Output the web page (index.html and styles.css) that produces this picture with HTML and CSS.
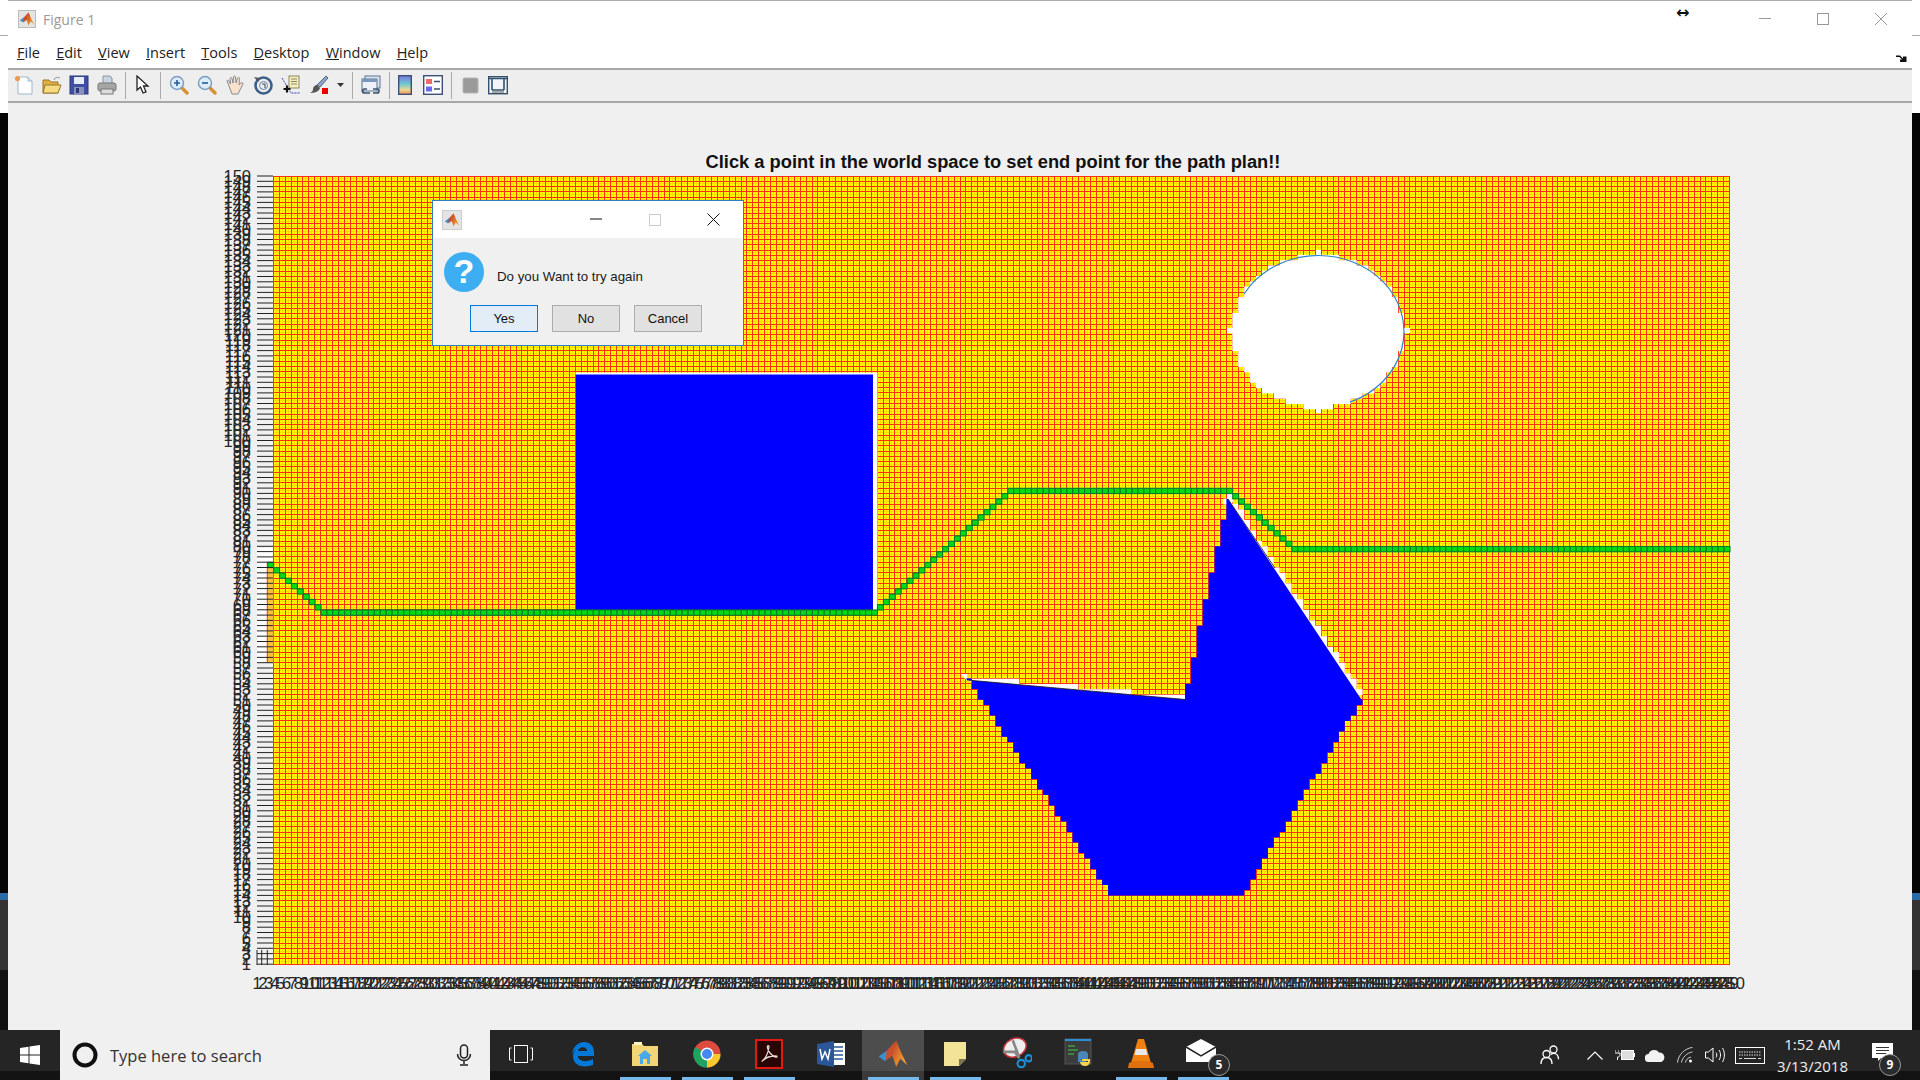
FILE: index.html
```html
<!DOCTYPE html>
<html lang="en">
<head>
  <meta charset="UTF-8" />
  <title>Figure 1</title>
  <link rel="stylesheet" href="styles.css">
</head>
<body>
  <svg class="defs" width="0" height="0">
    <defs>
      <linearGradient id="mlpeak" x1="0" y1="0" x2="1" y2="1"><stop offset="0" stop-color="#b8392a"/><stop offset=".6" stop-color="#e8882c"/><stop offset="1" stop-color="#f4b04a"/></linearGradient>
    </defs>
    <symbol id="ml" viewBox="0 0 20 20">
      <polygon points="1,11.5 6,8 9,10 5,14.5" fill="#3a8fd0"/>
      <polygon points="6,8 12,1.5 10,11 5.5,14" fill="#c9502a"/>
      <polygon points="12,1.5 15.5,10 19,17 14.5,13 12,18 9.5,11" fill="url(#mlpeak)"/>
    </symbol>
  </svg>

  <div class="desktop">
    <div class="edge edge-left"></div>
    <div class="window">
      <div class="titlebar">
        <span class="app-icon"><svg width="16" height="16"><use href="#ml"/></svg></span>
        <span class="title-text">Figure 1</span>
        <span class="resize-cursor">↔</span>
        <div class="win-btns">
          <svg width="14" height="14" viewBox="0 0 14 14"><path d="M1 6.500h12" stroke="#999" fill="none"/></svg>
          <svg width="14" height="14" viewBox="0 0 14 14"><rect x="1.500" y="1.500" width="11" height="11" stroke="#999" fill="none"/></svg>
          <svg width="14" height="14" viewBox="0 0 14 14"><path d="M1 1l12 12M13 1L1 13" stroke="#999" fill="none"/></svg>
        </div>
      </div>

      <div class="menubar">
        <span class="menu"><u>F</u>ile</span>
        <span class="menu"><u>E</u>dit</span>
        <span class="menu"><u>V</u>iew</span>
        <span class="menu"><u>I</u>nsert</span>
        <span class="menu"><u>T</u>ools</span>
        <span class="menu"><u>D</u>esktop</span>
        <span class="menu"><u>W</u>indow</span>
        <span class="menu"><u>H</u>elp</span>
        <svg class="dock-arrow" width="11" height="8" viewBox="0 0 11 8"><path d="M0 1.500h4l3 3V2.500l3.500 0V8H4V5.500h2L3.500 3H0z" fill="#111"/></svg>
      </div>

      <div class="toolbar">
        <div class="tb-group g1">
          <svg class="ti" viewBox="0 0 20 20"><path d="M4 2h10l4 4v13H4z" fill="#fff" stroke="#9db8d0"/><path d="M14 2v4h4" fill="#d8e6f2" stroke="#9db8d0"/><circle cx="3.500" cy="3.500" r="2.600" fill="#f09a50"/></svg>
          <svg class="ti" viewBox="0 0 20 20"><path d="M1 5h6l2 2h7v11H1z" fill="#e0b040" stroke="#96742a"/><path d="M3 10h16l-3 8H1z" fill="#f6dc80" stroke="#96742a"/><path d="M12 5c1-3 4-3 6-2" stroke="#7c8ea0" fill="none"/></svg>
          <svg class="ti" viewBox="0 0 20 20"><rect x="1" y="1" width="18" height="18" fill="#3f4fa8" stroke="#2c3678"/><rect x="5" y="2" width="10" height="7" fill="#e8ecf6"/><rect x="5" y="12" width="10" height="7" fill="#8a92b8"/><rect x="7" y="13" width="3" height="5" fill="#2c3678"/></svg>
          <svg class="ti" viewBox="0 0 20 20"><path d="M6 1h7l2 2v6H6z" fill="#c8d4e0" stroke="#8a949e"/><rect x="1" y="8" width="18" height="8" rx="2" fill="#a6a6a6" stroke="#777"/><rect x="4" y="14" width="12" height="5" fill="#dcdcdc" stroke="#777"/></svg>
        </div>
        <span class="sep"></span>
        <svg class="ti narrow" viewBox="0 0 18 20"><path d="M3 1v14l3.500-3 2.500 6 3-1.200-2.500-5.800H14z" fill="#fff" stroke="#222" stroke-width="1.300"/></svg>
        <span class="sep"></span>
        <div class="tb-group g3">
          <svg class="ti" viewBox="0 0 20 20"><path d="M12 12l6 6" stroke="#d89030" stroke-width="3.400" stroke-linecap="round"/><circle cx="8" cy="8" r="6.500" fill="#dcecf8" stroke="#7a9cc0" stroke-width="1.400"/><path d="M5 8h6M8 5v6" stroke="#2a5a9a" stroke-width="1.600"/></svg>
          <svg class="ti" viewBox="0 0 20 20"><path d="M12 12l6 6" stroke="#d89030" stroke-width="3.400" stroke-linecap="round"/><circle cx="8" cy="8" r="6.500" fill="#dcecf8" stroke="#7a9cc0" stroke-width="1.400"/><path d="M5 8h6" stroke="#2a5a9a" stroke-width="1.600"/></svg>
          <svg class="ti" viewBox="0 0 20 20"><path d="M4 11L2 6c0-1 1.500-1 2 0l1.500 3L5 3.500c0-1.200 2-1.200 2 0L8 8l.5-6c0-1.200 2-1.200 2 0L11 8l1.500-5c.5-1 2-.7 2 .5L14 10l2-2c1-1 2.500 0 2 1l-3 6-2 4H7z" fill="#f8e2cc" stroke="#8a8a9a"/></svg>
          <svg class="ti" viewBox="0 0 20 20"><circle cx="10.500" cy="10.500" r="8" fill="none" stroke="#3d5f88" stroke-width="2.600"/><circle cx="10.500" cy="10.500" r="4" fill="#e8eef4" stroke="#66809c"/><path d="M1 2l6 1-2 4z" fill="#556"/><path d="M9 9h3v4" stroke="#444" fill="none"/></svg>
          <svg class="ti" viewBox="0 0 20 20"><rect x="8" y="1" width="10" height="12" fill="#f4eec0" stroke="#8a8a60"/><path d="M10 4h6M10 6.500h6M10 9h6" stroke="#8a8a60"/><path d="M1 3l9 15h9" stroke="#3d3dd0" fill="none" stroke-dasharray="2 1"/><path d="M6 10.500v7M2.500 14h7" stroke="#111" stroke-width="2.200"/></svg>
          <svg class="ti" viewBox="0 0 20 20"><path d="M17 1l2 2-8 9-3-2z" fill="#8aa4d8" stroke="#566"/><path d="M8 10l3 3c-1 4-6 5-10 5 2-1 3-2 3-4s2-4 4-4z" fill="#555"/><rect x="13" y="13" width="6" height="6" fill="#e80000"/></svg>
        </div>
        <svg class="drop" width="7" height="4" viewBox="0 0 7 4"><path d="M0 0h7L3.500 4z" fill="#333"/></svg>
        <span class="sep"></span>
        <svg class="ti" viewBox="0 0 20 20"><rect x="4" y="1" width="15" height="12" fill="#dde6f0" stroke="#5a7090"/><rect x="1" y="4" width="15" height="12" fill="#eef2f8" stroke="#5a7090"/><rect x="1" y="4" width="15" height="3" fill="#7a98bc"/><path d="M6 14H3.500a2 2 0 000 4H9M12 14h4a2 2 0 010 4h-4" stroke="#3d556f" stroke-width="1.700" fill="none"/></svg>
        <span class="sep"></span>
        <div class="tb-group g5">
          <svg class="ti slim" viewBox="0 0 14 20"><defs><linearGradient id="cb" x1="0" y1="0" x2="0" y2="1"><stop offset="0" stop-color="#7a78e0"/><stop offset=".45" stop-color="#70c8d0"/><stop offset=".75" stop-color="#e8d890"/><stop offset="1" stop-color="#f09060"/></linearGradient></defs><rect x=".7" y=".7" width="12.600" height="18.600" fill="url(#cb)" stroke="#3c4f74" stroke-width="1.400"/></svg>
          <svg class="ti" viewBox="0 0 20 20"><rect x=".7" y=".7" width="18.600" height="18.600" fill="#fff" stroke="#3c4f74" stroke-width="1.400"/><rect x="3" y="4" width="6" height="5" fill="#e86a6a"/><rect x="3" y="11.500" width="6" height="5" fill="#6a6ae8"/><path d="M11 6.500h6M11 14h6" stroke="#3c4f74" stroke-width="1.600"/></svg>
        </div>
        <span class="sep"></span>
        <div class="tb-group g6">
          <svg class="ti" viewBox="0 0 20 20"><rect x="3" y="3" width="15" height="15" rx="1.500" fill="#9a9a9a" stroke="#b4b4b4"/></svg>
          <svg class="ti" viewBox="0 0 20 20"><rect x=".7" y="1.700" width="18.600" height="17" fill="#f2f4f8" stroke="#34506f" stroke-width="1.400"/><path d="M1 3.500h18M4 3v12M16 3v12M4 15h12" stroke="#34506f" stroke-width="1.600"/><path d="M4 17h12" stroke="#a8a8a8" stroke-width="2"/></svg>
        </div>
      </div>

      <div class="figure">
        <svg id="plot" class="plot" viewBox="8 102 1904 928" width="1904" height="928"></svg>

        <div class="dialog">
          <div class="dialog-title">
            <span class="dialog-icon"><svg width="16" height="16"><use href="#ml"/></svg></span>
            <svg class="dlg-min" width="12" height="2" viewBox="0 0 12 2"><path d="M0 1h12" stroke="#111"/></svg>
            <svg class="dlg-max" width="12" height="12" viewBox="0 0 12 12"><rect x=".5" y=".5" width="11" height="11" stroke="#ccc" fill="none"/></svg>
            <svg class="dlg-close" width="13" height="13" viewBox="0 0 13 13"><path d="M.5.5l12 12M12.500.5l-12 12" stroke="#111" fill="none"/></svg>
          </div>
          <div class="dialog-body">
            <div class="question">
              <svg width="40" height="40" viewBox="0 0 40 40">
                <circle cx="20" cy="20" r="20" fill="#3eaef2"/>
                <text x="20" y="31" text-anchor="middle" class="qmark">?</text>
              </svg>
              <span class="question-text">Do you Want to try again</span>
            </div>
            <div class="dialog-btns">
              <button class="btn btn-default">Yes</button>
              <button class="btn">No</button>
              <button class="btn">Cancel</button>
            </div>
          </div>
        </div>
      </div>
    </div>
    <div class="edge edge-right"></div>
  </div>

  <div class="taskbar">
    <div class="start">
      <svg width="20" height="20" viewBox="0 0 20 20"><path d="M0 3l8.500-1.200V9.500H0zM9.500 1.600L20 0v9.500H9.500zM0 10.500h8.500v7.700L0 17zM9.500 10.500H20V20L9.500 18.400z" fill="#fff"/></svg>
    </div>
    <div class="search">
      <svg width="26" height="26" viewBox="0 0 26 26"><circle cx="13" cy="13" r="10.500" fill="none" stroke="#111" stroke-width="4"/></svg>
      <span class="search-text">Type here to search</span>
      <svg class="mic" width="16" height="22" viewBox="0 0 16 22"><rect x="4.500" y="1" width="7" height="13" rx="3.500" fill="#f0f0f0" stroke="#222" stroke-width="1.500"/><path d="M1.500 10c0 4 3 6.500 6.500 6.500s6.500-2.500 6.500-6.500M8 17v3M4 21h8" fill="none" stroke="#222" stroke-width="1.500"/></svg>
    </div>

    <div class="task-item">
      <svg width="24" height="18" viewBox="0 0 24 18"><rect x="5.500" y=".5" width="13" height="17" fill="none" stroke="#fff"/><path d="M2.500 3H.5v12h2M21.500 3h2v12h-2" fill="none" stroke="#fff"/></svg>
    </div>
    <div class="task-item">
      <svg width="24" height="26" viewBox="0 0 24 26"><path d="M1 13C2 5 8 1 13 1c6 0 10 4 10 10v4H7c0 5 8 7 15 3v6c-8 3-20 2-20-9 0-3 1-5 3-7-2 1-3 3-4 5zM7 10h9c0-5-8-5-9 0z" fill="#0078d7"/></svg>
    </div>
    <div class="task-item open">
      <svg width="28" height="26" viewBox="0 0 28 26"><path d="M1 3h10l2 2h14v20H1z" fill="#f2d675"/><rect x="3" y="1" width="8" height="3" fill="#fff4c4"/><path d="M14 9l7 6h-2v8H9v-8H7z" fill="#4aa8e8"/><rect x="12" y="18" width="4" height="5" fill="#f2d675"/></svg>
    </div>
    <div class="task-item open">
      <svg width="28" height="28" viewBox="0 0 28 28"><circle cx="14" cy="14" r="13.500" fill="#dd4b3e"/><path d="M14 14L14 27.500A13.500 13.500 0 0 1 2.300 7z" fill="#1da462"/><path d="M14 14h13.500A13.500 13.500 0 0 1 14 27.500z" fill="#f7c92c"/><circle cx="14" cy="14" r="6.500" fill="#fff"/><circle cx="14" cy="14" r="5" fill="#4688f1"/></svg>
    </div>
    <div class="task-item open">
      <svg width="28" height="30" viewBox="0 0 28 30"><rect x="1" y="1" width="26" height="28" fill="#2a0505" stroke="#e01a10" stroke-width="2"/><path d="M7 22c3-2 6-8 7-14 0-2-2-2-1.500 1 .5 3 4 8 8 9 2 .5 2-1 0-1-4 0-9 1-12 4-1.500 1-1.500 1.500-1.500 1" fill="none" stroke="#e8d8d8" stroke-width="1.300"/></svg>
    </div>
    <div class="task-item">
      <svg width="28" height="28" viewBox="0 0 28 28"><rect x="9" y="3" width="19" height="22" fill="#fff"/><path d="M17 7h9M17 11h9M17 15h9M17 19h9" stroke="#2b579a" stroke-width="1.500"/><path d="M0 4l17-3v26L0 24z" fill="#2b579a"/><path d="M3 9l2 10 3-7 3 7 2-10" fill="none" stroke="#fff" stroke-width="1.500"/></svg>
    </div>
    <div class="task-item open active">
      <svg width="32" height="32"><use href="#ml"/></svg>
    </div>
    <div class="task-item open">
      <svg width="24" height="26" viewBox="0 0 24 26"><path d="M1 1h22v17l-7 7H1z" fill="#f2e496"/><path d="M16 25v-7h7z" fill="#7a7650"/></svg>
    </div>
    <div class="task-item">
      <svg width="30" height="34" viewBox="0 0 28 32"><ellipse cx="12" cy="10" rx="11" ry="8.500" fill="#eee" stroke="#c8343c" stroke-width="1.500" transform="rotate(-25 12 10)"/><path d="M10 3l6 16M1 14h11l4 6" stroke="#888" stroke-width="2.500" fill="none"/><circle cx="18" cy="25" r="3.500" fill="none" stroke="#1a8fd8" stroke-width="2"/><circle cx="25" cy="20" r="3" fill="none" stroke="#1a8fd8" stroke-width="2"/></svg>
    </div>
    <div class="task-item">
      <svg width="30" height="32" viewBox="0 0 30 32"><rect x="1" y="1" width="26" height="25" fill="#3c3c3c" stroke="#555"/><rect x="1" y="1" width="26" height="2" fill="#2a8fd8"/><path d="M4 8h7M4 12h10M4 16h6" stroke="#3aa040" stroke-width="1.500"/><path d="M14 22v-5c0-3 2-4 5-4s5 1 5 3v5H17v1h5v2h-8z" fill="#4a86b8"/><path d="M26 16v7c0 3-2 5-5 5s-5-2-5-4h8v-1h-6v-2h8z" fill="#f8d44c"/></svg>
    </div>
    <div class="task-item open">
      <svg width="26" height="32" viewBox="0 0 26 32"><path d="M10 1h6l7 24H3z" fill="#f08010"/><path d="M8 11h10l1.500 6h-13z" fill="#e8e8e8"/><path d="M1 25l5-2h14l5 2 1 5H0z" fill="#e07010"/></svg>
    </div>
    <div class="task-item open">
      <svg width="36" height="32" viewBox="0 0 36 32"><path d="M1 9L16 1l15 8v15H1z" fill="#fff"/><path d="M1 9l15 9 15-9" fill="none" stroke="#232323" stroke-width="1.500"/></svg>
      <span class="count count-mail">5</span>
    </div>

    <div class="tray">
      <div class="tray-cell people">
        <svg width="20" height="20" viewBox="0 0 20 20"><circle cx="13.500" cy="4.500" r="3.500" fill="none" stroke="#fff" stroke-width="1.300"/><circle cx="6.500" cy="9" r="3.500" fill="none" stroke="#fff" stroke-width="1.300"/><path d="M1 19c0-4 2-6.500 5.500-6.500S12 15 12 19M11 9.500c.8-.8 1.500-1.200 2.500-1.200 3 0 5 2.500 5 6" fill="none" stroke="#fff" stroke-width="1.300"/></svg>
      </div>
      <div class="tray-cell">
        <svg width="16" height="9" viewBox="0 0 16 9"><path d="M.5 8.500L8 1l7.500 7.500" fill="none" stroke="#fff" stroke-width="1.200"/></svg>
      </div>
      <div class="tray-cell">
        <svg width="20" height="12" viewBox="0 0 20 12"><path d="M0 2h1M3 2h1M0 4h5v2c0 1-1 2-2 2H2.500v3" fill="none" stroke="#fff"/><rect x="6.500" y="1.500" width="12" height="9" fill="#ddd" stroke="#fff"/><rect x="19" y="4" width="1" height="4" fill="#fff"/></svg>
      </div>
      <div class="tray-cell">
        <svg width="21" height="13" viewBox="0 0 21 13"><path d="M4 13a4 4 0 01-.5-8A6 6 0 0114 3.500 5 5 0 0116.500 13z" fill="#f2f2f2"/></svg>
      </div>
      <div class="tray-cell">
        <svg width="16" height="16" viewBox="0 0 16 16"><path d="M.5 15.500C1 8 8 1 15.500.5M4.500 15.500C5 11 10 5.500 15.500 5M8.500 15.500c.3-2.500 2.500-5 5.500-5.500" fill="none" stroke="#ccc"/><circle cx="13.500" cy="14" r="1.500" fill="#fff"/></svg>
      </div>
      <div class="tray-cell">
        <svg width="21" height="16" viewBox="0 0 21 16"><path d="M.5 5h3L8 1v14L3.500 11h-3z" fill="none" stroke="#fff"/><path d="M11 5.500c1 1.500 1 3.500 0 5M14 3c2 3 2 7 0 10M17.500 1c2.500 4 2.500 10 0 14" fill="none" stroke="#fff"/></svg>
      </div>
      <div class="tray-cell kbd">
        <svg width="30" height="17" viewBox="0 0 30 17"><rect x=".5" y=".5" width="29" height="16" fill="none" stroke="#fff"/><path d="M4 5h22M4 8h22" stroke="#ddd" stroke-dasharray="1.500 1"/><path d="M4 11.500h3M9 11.500h12M23 11.500h3" stroke="#ddd"/></svg>
      </div>
      <div class="clock">
        <span>1:52 AM</span>
        <span>3/13/2018</span>
      </div>
      <div class="tray-cell notify">
        <svg width="21" height="18" viewBox="0 0 21 18"><path d="M0 0h21v15H9l-3 3v-3H0z" fill="#fff"/><path d="M4 4.500h13M4 7.500h13M4 10.500h10" stroke="#333"/></svg>
        <span class="count count-notify">9</span>
      </div>
    </div>
  </div>

  <script src="script.js"></script>
</body>
</html>
```

FILE: styles.css
```css
html, body {
  margin: 0;
  padding: 0;
}
body {
  width: 1920px;
  height: 1080px;
  overflow: hidden;
  background: #000;
  display: flex;
  flex-direction: column;
  font-family: 'Open Sans', sans-serif;
}
.defs {
  position: absolute;
}
.desktop {
  display: flex;
  height: 1030px;
}
.edge {
  width: 8px;
  flex: none;
}
.edge-left,
.edge-right {
  background: linear-gradient(to bottom,
    #fff 0, #fff 35px, #aaa 35px, #aaa 36px, #fff 36px, #fff 113px,
    #050505 113px, #050505 893px, #2a6aa8 893px, #2a6aa8 900px,
    #333 900px, #333 970px, #111 970px);
}
.window {
  flex: 1;
  display: flex;
  flex-direction: column;
  background: #f0f0f0;
  border-top: 1px solid #aaa;
}

/* title + menu */
.titlebar {
  height: 36px;
  background: #fff;
  display: flex;
  align-items: center;
  position: relative;
  padding-left: 10px;
}
.app-icon {
  width: 18px;
  height: 18px;
  display: flex;
  align-items: center;
  justify-content: center;
  background: #e4e4e4;
  border: 1px solid #bbb;
  box-sizing: border-box;
}
.title-text {
  margin-left: 7px;
  font-size: 14px;
  color: #9a9a9a;
}
.resize-cursor {
  position: absolute;
  left: 1668px;
  top: 2px;
  font-size: 16px;
  font-weight: bold;
  color: #111;
  font-family: 'DejaVu Sans', sans-serif;
}
.win-btns {
  margin-left: auto;
  display: flex;
  gap: 44px;
  padding-right: 24px;
}
.menubar {
  height: 31px;
  background: #fff;
  border-bottom: 2px solid #a8a8a8;
  display: flex;
  align-items: center;
  padding-left: 9px;
  font-size: 14.5px;
  color: #222;
  position: relative;
}
.menu {
  margin-right: 16.2px;
}
.dock-arrow {
  position: absolute;
  right: 5px;
  top: 17px;
}
.toolbar {
  height: 33px;
  box-sizing: border-box;
  background: #eee;
  border-bottom: 2px solid #a8a8a8;
  display: flex;
  align-items: center;
  gap: 8px;
  padding: 0 0 1px 6px;
}
.tb-group {
  display: flex;
  align-items: center;
}
.g1 { gap: 7.5px; }
.g3 { gap: 8px; }
.g5 { gap: 11px; }
.g6 { gap: 8px; }
.ti {
  width: 20px;
  height: 20px;
  flex: none;
}
.ti.narrow { width: 18px; }
.ti.slim { width: 14px; }
.sep {
  width: 1px;
  height: 27px;
  background: #aaa;
  flex: none;
}

/* figure */
.figure {
  flex: 1;
  position: relative;
}
.plot {
  position: absolute;
  left: 0;
  top: -1px;
}
.plot-title {
  font: bold 18.3px 'Liberation Sans', sans-serif;
  fill: #111;
}
.tick-label {
  font: 16.5px 'Liberation Sans', sans-serif;
  fill: #262626;
}

/* question dialog */
.dialog {
  position: absolute;
  left: 424px;
  top: 97px;
  width: 312px;
  height: 146px;
  box-sizing: border-box;
  border: 1px solid #2d7dc0;
  background: #f0f0f0;
  display: flex;
  flex-direction: column;
}
.dialog-title {
  height: 37px;
  background: #fff;
  position: relative;
  display: flex;
  align-items: center;
}
.dialog-icon {
  width: 20px;
  height: 20px;
  margin-left: 9px;
  display: flex;
  align-items: center;
  justify-content: center;
  background: #e4e4e4;
  border: 1px solid #ccc;
  box-sizing: border-box;
}
.dlg-min { position: absolute; left: 157px; top: 17px; }
.dlg-max { position: absolute; left: 216px; top: 13px; }
.dlg-close { position: absolute; left: 274px; top: 12px; }
.dialog-body {
  flex: 1;
  padding: 14px 0 0 11px;
}
.question {
  display: flex;
  align-items: center;
  height: 40px;
}
.qmark {
  font: bold 34px 'Liberation Sans', sans-serif;
  fill: #fff;
}
.question-text {
  margin-left: 13px;
  margin-top: 8px;
  font: 13.3px 'Liberation Sans', sans-serif;
  color: #1a1a1a;
}
.dialog-btns {
  display: flex;
  gap: 14px;
  margin: 13px 0 0 26px;
}
.btn {
  width: 68px;
  height: 27px;
  box-sizing: border-box;
  padding: 0;
  background: #e1e1e1;
  border: 1px solid #adadad;
  font: 13px 'Liberation Sans', sans-serif;
  color: #111;
}
.btn-default {
  background: #e3edf8;
  border-color: #0078d7;
}

/* taskbar */
.taskbar {
  height: 50px;
  display: flex;
  background: linear-gradient(to bottom, #252525 0, #252525 41px, #131313 41px);
}
.start {
  width: 60px;
  display: flex;
  align-items: center;
  justify-content: center;
}
.search {
  width: 430px;
  background: #f0f0f0;
  display: flex;
  align-items: center;
  padding-left: 12px;
  box-sizing: border-box;
}
.search-text {
  margin-left: 12px;
  font-size: 16.5px;
  color: #333;
}
.mic {
  margin-left: auto;
  margin-right: 18px;
}
.task-item {
  width: 62px;
  height: 50px;
  padding-bottom: 2px;
  box-sizing: border-box;
  display: flex;
  align-items: center;
  justify-content: center;
  position: relative;
}
.task-item.open::after {
  content: "";
  position: absolute;
  left: 6px;
  right: 5px;
  bottom: 0;
  height: 3px;
  background: #76b9ed;
}
.task-item.active {
  background: linear-gradient(to bottom, #4d4d4d 0, #4d4d4d 41px, #3a3a3a 41px);
}
.count {
  position: absolute;
  width: 20px;
  height: 20px;
  border-radius: 50%;
  border: 1px solid #999;
  background: #2b2b2b;
  color: #fff;
  font-size: 12px;
  font-weight: bold;
  line-height: 20px;
  text-align: center;
}
.count-mail {
  left: 36px;
  top: 24px;
}
.tray {
  margin-left: auto;
  display: flex;
  align-items: center;
  padding-right: 10px;
  color: #eee;
}
.tray-cell {
  width: 30px;
  height: 50px;
  display: flex;
  align-items: center;
  justify-content: center;
  position: relative;
}
.people {
  margin-right: 15px;
}
.kbd {
  width: 40px;
}
.clock {
  width: 85px;
  display: flex;
  flex-direction: column;
  align-items: center;
  gap: 2px;
  font-size: 15px;
  line-height: 20px;
}
.notify {
  width: 55px;
  padding-bottom: 6px;
  box-sizing: border-box;
}
.count-notify {
  left: 24px;
  top: 24px;
}
```

FILE: script.js
```js
// Dibuja la figura: rejilla, obstaculos, camino y marcas de los ejes
const svg = document.getElementById('plot');
const NS = 'http://www.w3.org/2000/svg';

const X0 = 273.3, Y0 = 176, CW = 5.92, CH = 5.29;
const COLS = 246, ROWS = 149;
const X1 = X0 + COLS * CW, Y1 = Y0 + ROWS * CH;

function add(tag, attrs, text) {
  const el = document.createElementNS(NS, tag);
  for (const k in attrs) el.setAttribute(k, attrs[k]);
  if (text !== undefined) el.textContent = text;
  svg.appendChild(el);
  return el;
}
const rect = (x, y, w, h, fill) => add('rect', { x, y, width: w, height: h, fill });

// --- rejilla ---
function gridLines(offset, x0, x1, y0, y1) {
  let d = '';
  for (let i = 0; x0 + (i + offset) * CW <= x1 + 0.1; i++) {
    const x = x0 + (i + offset) * CW;
    d += `M${x.toFixed(1)} ${y0}V${y1}`;
  }
  for (let j = 0; y0 + (j + offset) * CH <= y1 + 0.1; j++) {
    const y = y0 + (j + offset) * CH;
    d += `M${x0} ${y.toFixed(1)}H${x1}`;
  }
  return d;
}

rect(X0, Y0, X1 - X0, Y1 - Y0, '#ffff00');
add('path', { d: gridLines(0.5, X0, X1, Y0, Y1), stroke: '#ffdc00', 'stroke-width': 1, fill: 'none', 'shape-rendering': 'crispEdges' });
add('path', { d: gridLines(0, X0, X1, Y0, Y1), stroke: '#ff3010', 'stroke-width': 1, fill: 'none', 'shape-rendering': 'crispEdges' });

// columna suelta a la izquierda del eje
rect(257, 548, 16, 115, '#ffffff');
rect(267.3, 563, 6, 100, '#ffc040');
add('path', { d: 'M267.3 563V663', stroke: '#ff3010', 'stroke-width': 1 });

// --- circulo blanco ---
const cx = 1318.5, cy = 331.5, rx = 85.5, ry = 76;
for (let j = 0; j < ROWS; j++) {
  let min = null, max = null;
  for (let i = 0; i < COLS; i++) {
    const px = X0 + (i + 0.5) * CW, py = Y0 + (j + 0.5) * CH;
    const d = ((px - cx) / rx) ** 2 + ((py - cy) / ry) ** 2;
    if (d < 1.0) {
      if (min === null) min = i;
      max = i;
    }
  }
  if (min !== null) rect(X0 + min * CW, Y0 + j * CH - 0.5, (max - min + 1) * CW, CH + 1, '#ffffff');
}
rect(1316, 250, 5, 8, '#ffffff');
rect(1316, 405, 5, 8, '#ffffff');
rect(1227, 328, 8, 5, '#ffffff');
rect(1403, 328, 7, 5, '#ffffff');
const arcIni = [cx - 0.87 * rx, cy - 0.493 * ry], arcFin = [cx + 0.368 * rx, cy + 0.93 * ry];
add('path', { d: `M${arcIni}A${rx} ${ry} 0 1 1 ${arcFin}`, fill: 'none', stroke: '#2e86c8', 'stroke-width': 1.2 });

// --- rectangulo azul ---
rect(575.5, 372.5, 302, 240, '#ffffff');
rect(575.5, 374.5, 297.5, 238, '#0000ff');

// --- poligono azul ---
const snapX = x => X0 + Math.round((x - X0) / CW) * CW;
const snapY = y => Y0 + Math.round((y - Y0) / CH) * CH;

// escalera de (x1,y1) a (x2,y2) pegada a la rejilla
function stair(x1, y1, x2, y2) {
  const pts = [];
  const dir = y2 > y1 ? 1 : -1;
  let y = snapY(y1);
  let lastX = snapX(x1);
  while ((y2 - y) * dir > 0.5) {
    const ny = y + dir * CH;
    const t = (ny - y1) / (y2 - y1);
    const nx = snapX(x1 + (x2 - x1) * t);
    pts.push([lastX, y], [lastX, ny]);
    lastX = nx;
    y = ny;
  }
  pts.push([lastX, y]);
  return pts;
}

const A = [967, 680], B = [1185, 699.5], C = [1228, 499], D = [1361, 699], E = [1241, 895.4], F = [1109, 895.4];

// cuñas blancas sobre el borde superior y a la derecha
add('polygon', {
  points: '961,674 967,674 967,678.7 1019.3,678.7 1019.3,684 1078.3,684 1078.3,689.3 1131.7,689.3 1131.7,694.7 1185,694.7 1185,700 967,681',
  fill: '#ffffff'
});
rect(1227, 490, 6, 12, '#ffffff');
for (let y = snapY(C[1]); y < D[1] - CH; y += CH) {
  const x = C[0] + (D[0] - C[0]) * (y + CH - C[1]) / (D[1] - C[1]);
  const right = X0 + Math.ceil((x - X0) / CW) * CW;
  rect(x - 8, y, right - x + 8, CH + 0.5, '#ffffff');
}

const outline = [A, B]
  .concat(stair(B[0], B[1], C[0], C[1]))
  .concat([C, D])
  .concat(stair(D[0], D[1], E[0], E[1]))
  .concat([E, F])
  .concat(stair(F[0], F[1], A[0], A[1]));
add('polygon', { points: outline.map(p => p[0].toFixed(1) + ',' + p[1].toFixed(1)).join(' '), fill: '#0000ff' });
add('path', { d: `M${A}L${B}`, stroke: '#111', 'stroke-width': 0.8 });
add('path', { d: `M${C}L1275 568`, stroke: '#111', 'stroke-width': 0.8 });

// --- camino verde ---
const GX = 270.7, GY = 565;
function cell(c, k) {
  add('rect', {
    x: GX + c * CW - CW / 2, y: GY + k * CH - CH / 2, width: CW, height: CH,
    fill: '#00dc14', stroke: '#0b7a2a', 'stroke-width': 1.1
  });
}
let c = 0, k = 0;
const tramos = [[9, 1], [93, 0], [23, -1], [37, 0], [11, 1], [73, 0]];
cell(0, 0);
for (const [pasos, dy] of tramos) {
  for (let n = 0; n < pasos; n++) {
    c++;
    k += dy;
    cell(c, k);
  }
}

// --- marcas y etiquetas ---
let ticks = '';
for (let j = 0; j < 150; j++) {
  const y = (Y0 + j * CH).toFixed(1);
  ticks += `M257 ${y}H273`;
  add('text', { class: 'tick-label', x: 251, y: (Y0 + j * CH + 6).toFixed(1), 'text-anchor': 'end' }, 150 - j);
}
ticks += 'M257 950V965M261.7 950V965M267.3 950V965';
add('path', { d: ticks, stroke: '#222', 'stroke-width': 1, fill: 'none' });

for (let n = 1; n <= 250; n++) {
  add('text', { class: 'tick-label', x: (257 + (n - 1) * CW).toFixed(1), y: 989, 'text-anchor': 'middle' }, n);
}

add('text', { class: 'plot-title', x: 993, y: 168, 'text-anchor': 'middle' },
  'Click a point in the world space to set end point for the path plan!!');
```
